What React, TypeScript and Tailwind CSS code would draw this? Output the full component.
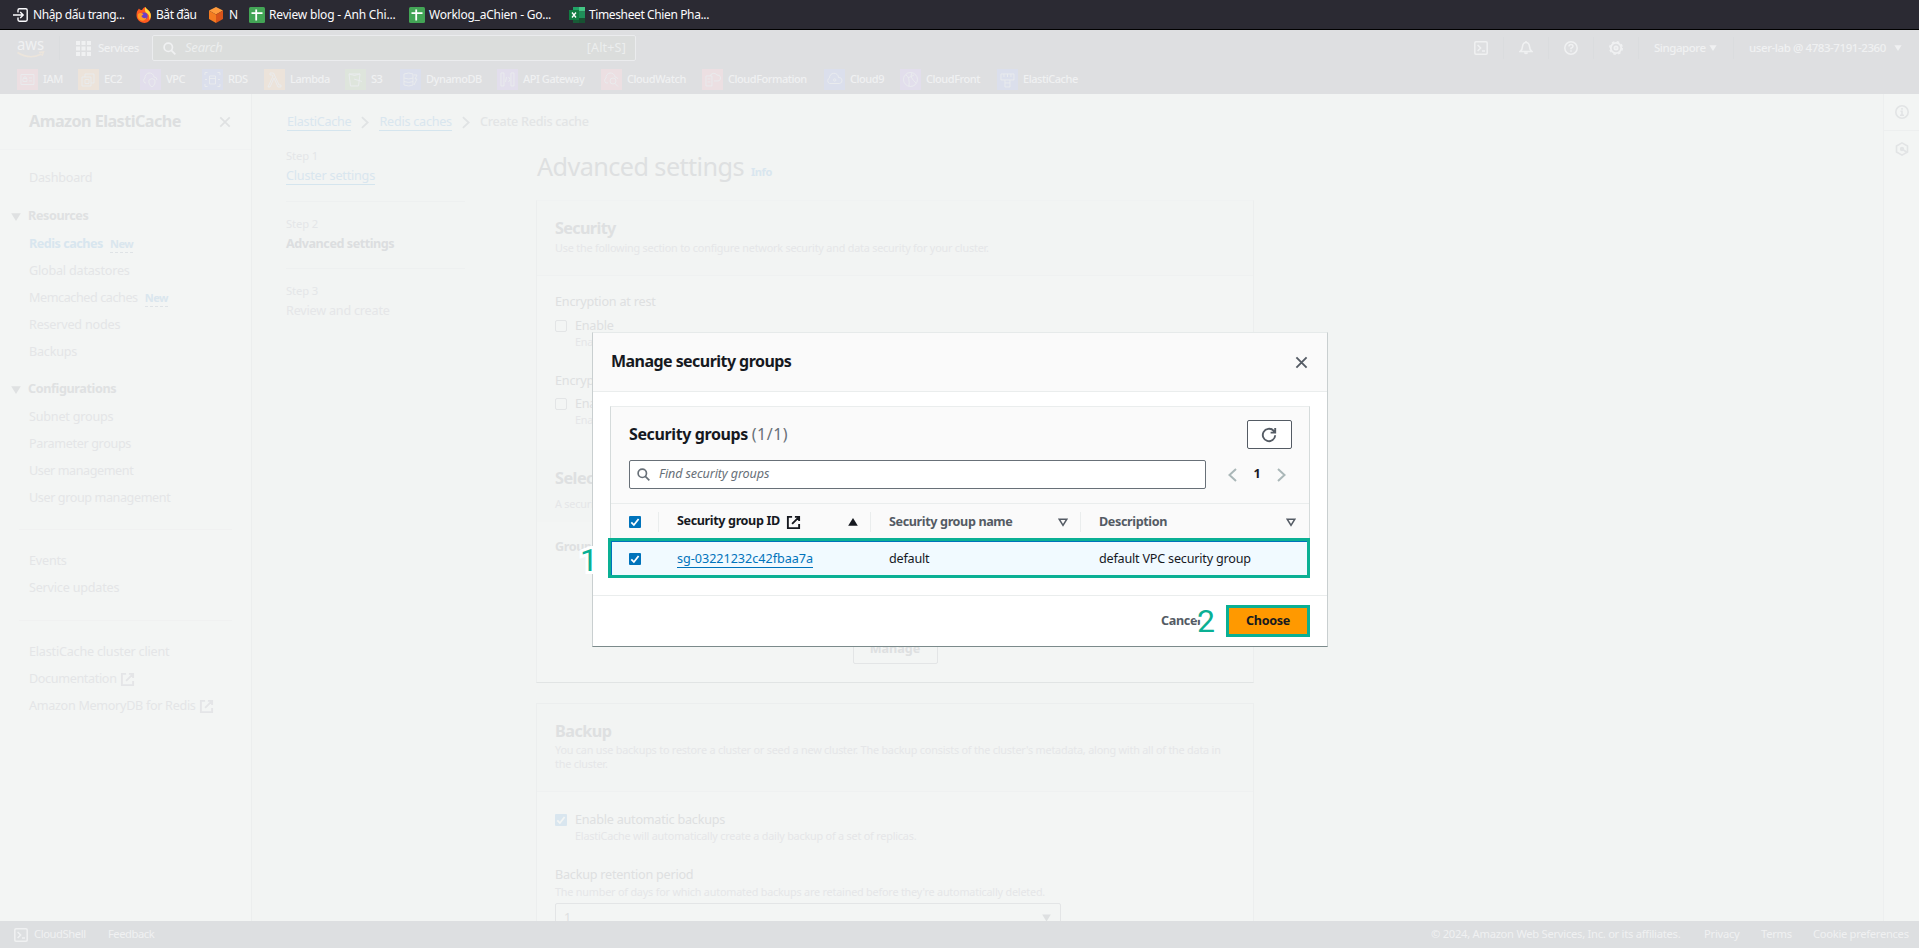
import React from 'react';

type IconProps = { className?: string };

const ExternalIcon = ({ className = '' }: IconProps) => (
  <svg viewBox="0 0 16 16" className={className} fill="none" stroke="currentColor" strokeWidth="2">
    <path d="M6.5 2H2v12h12V9.5M9.5 2H14v4.5M14 2 6.5 9.5" />
  </svg>
);

const CloseIcon = ({ className = '' }: IconProps) => (
  <svg viewBox="0 0 14 14" className={className} fill="none" stroke="currentColor" strokeWidth="2">
    <path d="m1.5 1.5 11 11M12.5 1.5l-11 11" />
  </svg>
);

const ChevronIcon = ({ className = '' }: IconProps) => (
  <svg viewBox="0 0 9 14" className={className} fill="none" stroke="currentColor" strokeWidth="2">
    <path d="m1 1 6.5 6L1 13" />
  </svg>
);

const SearchIcon = ({ className = '' }: IconProps) => (
  <svg viewBox="0 0 14 14" className={className} fill="none" stroke="currentColor" strokeWidth="1.8">
    <circle cx="5.7" cy="5.7" r="4.5" />
    <path d="m9 9 4.3 4.3" />
  </svg>
);

const Caret = ({ className = '' }: IconProps) => (
  <svg viewBox="0 0 10 8" className={className} fill="currentColor">
    <path d="M.2.2h9.600L5 7.900z" />
  </svg>
);

const ShellIcon = ({ className = '' }: IconProps) => (
  <svg viewBox="0 0 14 14" className={className} fill="none" stroke="currentColor" strokeWidth="1.5">
    <rect x=".8" y=".8" width="12.4" height="12.4" rx="1.2" />
    <path d="m3.6 4 3 3-3 3M8 10h3" />
  </svg>
);

const Check = ({ className = '' }: IconProps) => (
  <span className={`block size-3 shrink-0 rounded-[1px] ${className}`}>
    <svg viewBox="0 0 12 12" className="size-3" fill="none" stroke="currentColor" strokeWidth="1.8">
      <path d="M2.3 6.3 4.9 9l4.7-6" />
    </svg>
  </span>
);

const Sheets = () => (
  <svg viewBox="0 0 16 16" className="size-4 shrink-0">
    <rect width="16" height="16" rx="1.5" fill="#43a556" />
    <path d="M7.2 2.5v11M2.5 6.2h11" stroke="#fff" strokeWidth="1.8" />
  </svg>
);

function BookmarksBar() {
  return (
    <div className="flex h-[30px] shrink-0 items-center border-b border-black bg-[#2b2a33] pt-px pl-[13px] text-[12px] tracking-[-0.38px] text-[#fbfbfe]">
      <div className="flex w-[123px] items-center gap-1">
        <svg viewBox="0 0 16 16" className="size-4 shrink-0" fill="none" stroke="currentColor" strokeWidth="1.4">
          <path d="M5 5.5V3.2Q5 1.8 6.400 1.800h6.400Q14.200 1.800 14.200 3.200v9.600Q14.200 14.200 12.800 14.200H6.400Q5 14.200 5 12.800v-2.300M0 8h10M7.200 5l3 3-3 3" />
        </svg>
        <span className="tracking-[-0.42px]">Nhập dấu trang...</span>
      </div>
      <div className="flex w-[72px] items-center gap-1">
        <svg viewBox="0 0 16 16" className="size-4 shrink-0">
          <path d="M1 4.500C2 3 2.500 2 3 1.500 3.500 2.500 5 3 6 3c1-2 2.500-3 3.500-3C10 2 12 2.500 13.500 4.500 16 8 15.500 13 11.500 15.200 7.500 17.200 2.500 15 1 11 .3 9 .4 6.500 1 4.500z" fill="#ff5a1f" />
          <path d="M9.500 0c.5 2 2.500 2.500 4 4.500 2 3 1.800 6-.3 8.500.5-4-.5-6-3.500-7.500C9 4 8.500 2 9.500 0z" fill="#ffd83a" />
          <circle cx="8" cy="9" r="3.600" fill="#6a3fc8" />
          <path d="M2 7c2-1.500 4-1 5.500.3L5.500 9c.5 2 3 3 5 1.500-.5 3-4 4-6.500 2.500S1.500 9 2 7z" fill="#ff9a26" />
        </svg>
        <span className="tracking-[-0.45px]">Bắt đầu</span>
      </div>
      <div className="flex w-[41px] items-center gap-[5px]">
        <svg viewBox="0 0 16 16" className="size-4 shrink-0">
          <path d="M8 0 15 3.500 8 7.500 1 3.500z" fill="#ff9a3c" />
          <path d="M1 3.500 8 7.500V16l-7-4z" fill="#f47a20" />
          <path d="M15 3.500 8 7.500V16l7-4z" fill="#d9541a" />
        </svg>
        <span>N</span>
      </div>
      <div className="flex w-40 items-center gap-1">
        <Sheets />
        <span className="tracking-[-0.18px]">Review blog - Anh Chi...</span>
      </div>
      <div className="flex w-40 items-center gap-1">
        <Sheets />
        <span className="tracking-[-0.24px]">Worklog_aChien - Go...</span>
      </div>
      <div className="flex items-center gap-1">
        <svg viewBox="0 0 16 16" className="size-4 shrink-0">
          <path d="M4 0h6v8H4z" fill="#21a366" />
          <path d="M10 0h6v4.500h-6z" fill="#43c584" />
          <path d="M10 4.500h6V11h-6z" fill="#1f8f59" />
          <path d="M4 8h6v8H4z" fill="#185c37" />
          <path d="M10 11h6v5h-6z" fill="#175232" />
          <path d="M0 3h10v10H0z" fill="#107c41" />
          <path d="m3 5.500 4 5M7 5.500l-4 5" stroke="#fff" strokeWidth="1.300" />
        </svg>
        <span>Timesheet Chien Pha...</span>
      </div>
    </div>
  );
}

const glyphs: Record<string, string> = {
  id: 'M4 5.500h13v10H4zM6 12.500h4v-3H6zM6.800 9.500V8h2.400v1.500M12 9h3M12 12h3',
  chip: 'M4 8h9v9H4zM7 8V5h9v9h-3M7 10.500h4v4H7z',
  cloudShield: 'M6 14H5a3 3 0 0 1 0-5 4.500 4.500 0 0 1 9-1 3 3 0 0 1 3 3M9 11l3-1.500 3 1.500v3q-1 3-3 4-2-1-3-4z',
  db: 'M7.500 7h6v8h-6zM7.500 9.500h6M3 6V3.500h2.500M18 6V3.500h-2.500M3 15v2.500h2.500M18 15v2.500h-2.500M3 10.500h2M16 10.500h2',
  lambda: 'M6 4h3.500l5.500 12h2v2h-3L10 9l-4 9H4l5-11-.6-1H6z',
  bucket: 'M4 5h11l-1.500 12h-8zM4 5q5.500 3 11 0M9 10l8 2.500',
  table: 'M4 5q5-2 9 0v11q-4 2-9 0zM4 9q5 2 9 0M4 12.500q5 2 9 0M14 6h3l-2 4h2l-3 6',
  gateway: 'M4 4h3v13H4zM14 4h3v13h-3zM9.500 8l-1 5M11.500 8l1.500 2.500-1.500 2.500',
  cloudSearch: 'M7 14H5a3 3 0 0 1 0-5 4.500 4.500 0 0 1 9-1 3 3 0 0 1 3 2M9 12a3 3 0 1 0 6 0 3 3 0 1 0-6 0M14 14.500l3 3',
  stack: 'M4 7h6v10H4zM5.500 10h3M5.500 13h3M8 7a4 4 0 0 1 7-1 3 3 0 0 1 1 6h-4',
  cloud: 'M5.500 14.500a3 3 0 0 1 0-5.500 4.500 4.500 0 0 1 9-.5 3 3 0 0 1 1 6zM9.500 11a1.200 1.200 0 1 0 2.400 0 1.200 1.200 0 1 0-2.400 0',
  globe: 'M3.500 10.500a7 7 0 1 0 14 0 7 7 0 1 0-14 0M6 6q4 2 3 11M12 4q-3 4 4 10M8 9l6-3',
  cache: 'M4 5h13v6H4zM7 5v3M10.500 5v3M14 5v3M8 11v7h5v-7M8 14h5',
};

const RED = 'bg-[#ecdfe2]';
const ORANGE = 'bg-[#ece3da]';
const PURPLE = 'bg-[#e2deec]';
const BLUE = 'bg-[#dbdfec]';
const GREEN = 'bg-[#dee5dc]';

const services: [string, string, string, string][] = [
  ['IAM', 'id', RED, 'w-[61px]'],
  ['EC2', 'chip', ORANGE, 'w-[62px]'],
  ['VPC', 'cloudShield', PURPLE, 'w-[62px]'],
  ['RDS', 'db', BLUE, 'w-[62px]'],
  ['Lambda', 'lambda', ORANGE, 'w-[81px]'],
  ['S3', 'bucket', GREEN, 'w-[55px]'],
  ['DynamoDB', 'table', BLUE, 'w-[97px]'],
  ['API Gateway', 'gateway', PURPLE, 'w-[104px]'],
  ['CloudWatch', 'cloudSearch', RED, 'w-[101px]'],
  ['CloudFormation', 'stack', RED, 'w-[122px]'],
  ['Cloud9', 'cloud', BLUE, 'w-[76px]'],
  ['CloudFront', 'globe', PURPLE, 'w-[97px]'],
  ['ElastiCache', 'cache', BLUE, 'w-[90px]'],
];

function TopNav() {
  return (
    <header className="flex h-16 shrink-0 flex-col bg-[#dedfe1] text-[#f0f1f2]">
      <div className="flex h-9 items-center pl-[17px]">
        <svg viewBox="0 0 28 22" className="-mt-px h-[22px] w-7" fill="none" stroke="currentColor">
          <text x="0" y="12.500" fontSize="15.500" fontFamily="Noto Sans" textLength="27" lengthAdjust="spacingAndGlyphs" fill="currentColor" stroke="none">aws</text>
          <path d="M.5 15.500q12 7.500 24 1.500M22 15.500l4.500-.5-1.500 4" stroke="#ece5dc" strokeWidth="1.500" />
        </svg>
        <div className="ml-3.5 h-6 w-px bg-[#dadcde]" />
        <svg viewBox="0 0 15 15" className="ml-4 size-[15px]" fill="currentColor">
          {[0, 5.500, 11].map((y) => [0, 5.500, 11].map((x) => <rect key={`${x}-${y}`} x={x} y={y} width="4" height="4" />))}
        </svg>
        <span className="ml-[7px] w-[54px] text-[11.500px] font-medium tracking-[-0.5px]">Services</span>
        <div className="flex h-[26px] w-[484px] items-center rounded-[2px] border border-[#ebecee] bg-[#dbdddc] pr-[9px] pl-[10px]">
          <SearchIcon className="size-[13px]" />
          <span className="ml-[9px] grow text-[13px] tracking-[-0.2px] italic text-[#eceeee]">Search</span>
          <span className="text-[12.500px] tracking-[0.2px] text-[#eceeee]">[Alt+S]</span>
        </div>
        <div className="ml-auto flex h-full items-center pr-[17px] text-[11.500px] tracking-[-0.25px]">
          <div className="flex h-[22px] w-[45px] items-center justify-center border-r border-[#dadcde]"><ShellIcon className="size-3.5" /></div>
          <div className="flex h-[22px] w-[45px] items-center justify-center border-r border-[#dadcde]">
            <svg viewBox="0 0 14 14" className="size-3.5" fill="none" stroke="currentColor" strokeWidth="1.600"><path d="M1 10.500h12q-2.500-2-2.500-5Q10 1.500 7 1.500T3.500 5.500q0 3-2.500 5zM5.500 11.500q1.500 2 3 0M7 0v1.500" /></svg>
          </div>
          <div className="flex h-[22px] w-[45px] items-center justify-center border-r border-[#dadcde]">
            <svg viewBox="0 0 14 14" className="size-3.5" fill="none" stroke="currentColor" strokeWidth="1.500"><circle cx="7" cy="7" r="6.200" /><path d="M5 5.500Q5 3.500 7 3.500t2 1.800Q9 6.500 7 7.300v1M7 9.300v1.500" /></svg>
          </div>
          <div className="flex h-[22px] w-[45px] items-center justify-center border-r border-[#dadcde]">
            <svg viewBox="0 0 14 14" className="size-3.5" fill="none" stroke="currentColor" strokeWidth="1.800"><circle cx="7" cy="7" r="5.200" /><circle cx="7" cy="7" r="1.600" /><circle cx="7" cy="7" r="6.300" strokeDasharray="2.500 2.448" strokeWidth="1.400" /></svg>
          </div>
          <div className="flex h-[22px] w-[95px] items-center justify-between border-r border-[#dadcde] pr-[16px] pl-[15px]"><span className="font-medium tracking-[-0.45px]">Singapore</span><Caret className="h-1.5 w-[8px]" /></div>
          <div className="flex w-[168px] items-center justify-between pl-[15px]"><span className="font-medium tracking-[-0.42px] whitespace-nowrap">user-lab @ 4783-7191-2360</span><Caret className="h-1.5 w-[8px]" /></div>
        </div>
      </div>
      <div className="flex h-[26px] items-center pl-[17px] text-[11px] font-medium">
        {services.map(([name, glyph, tint, width]) => (
          <div key={name} className={`flex items-center gap-[5px] ${width}`}>
            <span className={`block size-[21px] shrink-0 text-[#eaecee] ${tint}`}>
              <svg viewBox="0 0 21 21" className="size-[21px]" fill="none" stroke="currentColor" strokeWidth=".9"><path d={glyphs[glyph]} /></svg>
            </span>
            <span className="tracking-[-0.45px] whitespace-nowrap">{name}</span>
          </div>
        ))}
      </div>
    </header>
  );
}

const NavItem = ({ children, className = '' }: { children: React.ReactNode; className?: string }) => (
  <li className={`flex h-[27px] items-center pl-[29px] ${className}`}>{children}</li>
);

const NavGroup = ({ children }: { children: React.ReactNode }) => (
  <div className="flex h-[29px] items-center pl-[11px] font-bold tracking-[-0.38px] text-[#dfe1e2]">
    <Caret className="mr-[7px] h-2 w-[10px]" />
    {children}
  </div>
);

const NewTag = () => (
  <span className="ml-[7px] border-b border-dashed border-[#dfe3e6] text-[11px] leading-4 font-bold tracking-[-0.45px] text-[#dae6ee]">New</span>
);

function Sidebar() {
  return (
    <nav className="h-full w-[252px] shrink-0 border-r border-[#eceeee] bg-[#f3f5f4] text-[12.600px] tracking-[-0.2px] text-[#e4e5e7]">
      <div className="flex h-14 items-center border-b border-[#f0f2f2] pr-[20px] pl-[29px]">
        <h2 className="grow text-[16.200px] font-bold tracking-[-0.55px] text-[#dddfe0]">Amazon ElastiCache</h2>
        <CloseIcon className="size-3 text-[#dfe1e2]" />
      </div>
      <ul className="pt-[15px]"><NavItem>Dashboard</NavItem></ul>
      <div className="h-[10px]" />
      <NavGroup>Resources</NavGroup>
      <ul>
        <NavItem><span className="font-bold tracking-[-0.48px] text-[#d8e6ef]">Redis caches</span><NewTag /></NavItem>
        <NavItem>Global datastores</NavItem>
        <NavItem className="tracking-[-0.42px]">Memcached caches<NewTag /></NavItem>
        <NavItem>Reserved nodes</NavItem>
        <NavItem>Backups</NavItem>
      </ul>
      <div className="h-[9px]" />
      <NavGroup>Configurations</NavGroup>
      <ul>
        <NavItem>Subnet groups</NavItem>
        <NavItem className="tracking-[-0.35px]">Parameter groups</NavItem>
        <NavItem className="tracking-[-0.42px]">User management</NavItem>
        <NavItem className="tracking-[-0.4px]">User group management</NavItem>
      </ul>
      <div className="mx-[19px] mt-[17px] h-px bg-[#f0f1f1]" />
      <ul className="pt-[18px]">
        <NavItem>Events</NavItem>
        <NavItem>Service updates</NavItem>
      </ul>
      <div className="mx-[19px] mt-[18px] h-px bg-[#f0f1f1]" />
      <ul className="pt-[18px]">
        <NavItem>ElastiCache cluster client</NavItem>
        <NavItem className="tracking-[-0.35px]">Documentation<ExternalIcon className="ml-[3px] size-[15px]" /></NavItem>
        <NavItem className="tracking-[-0.3px]">Amazon MemoryDB for Redis<ExternalIcon className="ml-[3px] size-[15px]" /></NavItem>
      </ul>
    </nav>
  );
}

const steps: [string, string, string][] = [
  ['Step 1', 'Cluster settings', 'border-b border-[#d5e5ee] tracking-[-0.2px] text-[#d9e6ef]'],
  ['Step 2', 'Advanced settings', 'font-bold tracking-[-0.45px] text-[#dcdee0]'],
  ['Step 3', 'Review and create', 'tracking-[-0.2px] text-[#e5e6e8]'],
];

function Steps() {
  return (
    <ol className="w-[250px] shrink-0">
      {steps.map(([step, label, style], i) => (
        <li key={step} className={`h-[67px] w-[179px] pt-[13px] ${i ? 'border-t border-[#eef0f0]' : ''}`}>
          <div className="h-[20px] text-[11.200px] leading-[17px] tracking-[-0.1px] text-[#e4e6e8]">{step}</div>
          <div className="flex text-[12.600px] leading-[17px]"><span className={style}>{label}</span></div>
        </li>
      ))}
    </ol>
  );
}

const Hint = ({ children, className = '' }: { children: React.ReactNode; className?: string }) => (
  <p className={`text-[10.800px] leading-[14px] tracking-[-0.19px] text-[#e5e6e8] ${className}`}>{children}</p>
);

const Option = ({ label, hint, checked }: { label: string; hint: string; checked?: boolean }) => (
  <div>
    <div className="flex h-4 items-center gap-2 text-[12.600px] tracking-[-0.22px]">
      {checked ? <Check className="bg-[#d9e6ef] text-[#f3f5f4]" /> : <span className="size-3 rounded-[2px] border border-[#e3e5e6]" />}
      {label}
    </div>
    <Hint className="mt-px pl-5">{hint}</Hint>
  </div>
);

function Content() {
  return (
    <div className="w-[718px] text-[#dee0e1]">
      <div className="flex h-[66px] items-baseline pt-[13px] pl-px">
        <h1 className="text-[25.200px] leading-[38px] tracking-[-0.56px]">Advanced settings</h1>
        <span className="ml-[7px] text-[11px] font-bold tracking-[-0.4px] text-[#d9e6ef]">Info</span>
      </div>
      <section className="h-[483px] border border-t-[#f0f2f2] border-r-[#eceeee] border-b-[#e1e4e4] border-l-[#eceeee] bg-[#f3f5f4]">
        <div className="h-[75px] border-b border-[#eff1f1] bg-[#f2f4f3] px-[18px] pt-4">
          <h2 className="text-[16.200px] leading-[22px] font-bold tracking-[-0.65px]">Security</h2>
          <Hint className="mt-0.5">Use the following section to configure network security and data security for your cluster.</Hint>
        </div>
        <div className="h-[174px] px-[18px] pt-[18px]">
          <div className="h-[24px] text-[12.600px] leading-4 tracking-[-0.2px]">Encryption at rest</div>
          <Option label="Enable" hint="Enables encryption of data stored on disk." />
          <div className="mt-6 h-[23px] text-[12.600px] leading-4 tracking-[-0.2px]">Encryption in transit</div>
          <Option label="Enable" hint="Enables encryption of data on the wire." />
        </div>
        <div className="h-[72px] bg-[#f2f4f3] px-[18px] pt-[17px]">
          <h2 className="text-[16.200px] leading-[22px] font-bold tracking-[-0.5px]">Selected security groups</h2>
          <Hint className="mt-2">A security group acts as a firewall.</Hint>
        </div>
        <div className="px-[18px] pt-[17px]">
          <div className="text-[12.600px] leading-4 font-bold tracking-[-0.4px]">Group ID</div>
          <div className="mt-[78px] flex justify-center">
            <button className="h-[31px] w-[85px] rounded-[2px] border border-[#e3e5e6] text-[12.600px] leading-[29px] font-bold">Manage</button>
          </div>
        </div>
      </section>
      <section className="mt-5 h-[260px] border border-[#eceeee] bg-[#f3f5f4]">
        <div className="h-[88px] border-b border-[#eff1f1] bg-[#f2f4f3] px-[18px] pt-4">
          <h2 className="text-[16.200px] leading-[22px] font-bold tracking-[-0.5px]">Backup</h2>
          <Hint className="mt-px">You can use backups to restore a cluster or seed a new cluster. The backup consists of the cluster's metadata, along with all of the data in the cluster.</Hint>
        </div>
        <div className="px-[18px] pt-[20px]">
          <Option checked label="Enable automatic backups" hint="ElastiCache will automatically create a daily backup of a set of replicas." />
          <div className="mt-[24px] text-[12.600px] leading-4 tracking-[-0.22px]">Backup retention period</div>
          <Hint className="mt-[2px]">The number of days for which automated backups are retained before they're automatically deleted.</Hint>
          <div className="mt-[4px] flex h-[30px] w-[506px] items-center justify-between rounded-[2px] border border-[#e3e5e6] pr-[9px] pl-2 text-[12.600px]">
            1<Caret className="h-2 w-[9px]" />
          </div>
        </div>
      </section>
    </div>
  );
}

function ToolRail() {
  return (
    <aside className="flex h-full w-9 shrink-0 flex-col border-l border-[#edefef] bg-[#f3f5f4] text-[#e2e4e5]">
      <div className="flex h-[37px] items-center justify-center border-b border-[#edefef]">
        <svg viewBox="0 0 14 14" className="size-3.5" fill="none" stroke="currentColor" strokeWidth="1.600"><circle cx="7" cy="7" r="6.200" /><path d="M7 3v1.700M5.500 6.300H7v4M5 10.300h4" /></svg>
      </div>
      <div className="flex h-[36px] items-center justify-center">
        <svg viewBox="0 0 14 14" className="size-3.5" fill="none" stroke="currentColor" strokeWidth="1.600"><path d="M7 .9 12.500 4v6L7 13.100 1.500 10V4zM7 7l4.500 3" /><circle cx="7" cy="7" r="1.400" fill="currentColor" /></svg>
      </div>
    </aside>
  );
}

function Footer() {
  return (
    <footer className="flex h-[27px] shrink-0 items-center bg-[#dddfe1] pr-[14px] pl-3.5 text-[11.200px] tracking-[-0.25px] text-[#f0f1f2]">
      <ShellIcon className="size-3.5" />
      <span className="ml-[6px] w-[74px] tracking-[-0.4px]">CloudShell</span>
      <span className="tracking-[-0.45px]">Feedback</span>
      <span className="ml-auto w-[273px] tracking-[-0.27px] whitespace-nowrap">© 2024, Amazon Web Services, Inc. or its affiliates.</span>
      <span className="w-[57px]">Privacy</span>
      <span className="w-[52px]">Terms</span>
      <span className="w-[92px] tracking-[-0.3px] whitespace-nowrap">Cookie preferences</span>
    </footer>
  );
}

const SortIcon = ({ className = '' }: IconProps) => (
  <svg viewBox="0 0 10 9" className={`h-[9px] w-[10px] ${className}`} fill="none" stroke="currentColor" strokeWidth="1.600">
    <path d="M1.300 1.300h7.400L5 7.300z" />
  </svg>
);

function Modal() {
  return (
    <div role="dialog" className="absolute top-[332px] left-[592px] flex h-[315px] w-[736px] flex-col border border-t-[#e6eaea] border-r-[#c9cfd0] border-b-[#7b8a8b] border-l-[#c9cfd0] bg-white text-[12.600px] text-[#16191f]">
      <div className="flex h-[59px] shrink-0 items-center justify-between border-b border-[#eaeded] bg-[#fafafa] pr-[19px] pl-[18px]">
        <h2 className="mb-0.5 text-[16px] font-bold tracking-[-0.55px]">Manage security groups</h2>
        <CloseIcon className="size-[13px] text-[#545b64]" />
      </div>
      <div className="h-[203px] shrink-0 px-[17px] pt-[14px]">
        <div className="border border-t-[#eaeded] border-r-[#d5dbdb] border-b-transparent border-l-[#d5dbdb] bg-[#fafafa]">
          <div className="flex h-[42px] items-end justify-between pr-[17px] pl-[18px]">
            <h3 className="mb-[3px] text-[16px] font-bold tracking-[-0.38px]">
              Security groups <span className="font-normal tracking-[0.5px] text-[#687078]">(1/1)</span>
            </h3>
            <button className="flex h-[29px] w-[45px] items-center justify-center rounded-[2px] border border-[#545b64] bg-white pr-px text-[#545b64]">
              <svg viewBox="0 0 16 16" className="size-4" fill="none" stroke="currentColor" strokeWidth="1.900"><path d="M14.200 8.300A6.200 6.200 0 1 1 12.300 3.500L14 5.200M14.200 1v4.600H9.600" /></svg>
            </button>
          </div>
          <div className="flex h-[55px] items-start border-b border-[#eaeded] pt-[11px] pl-[18px]">
            <div className="flex h-[29px] w-[577px] items-center gap-[9px] rounded-[2px] border border-[#687078] bg-white pl-[7px] text-[#687078]">
              <SearchIcon className="size-[13px]" />
              <span className="tracking-[-0.12px] italic">Find security groups</span>
            </div>
            <div className="ml-[22px] flex h-[29px] w-[58px] items-center justify-between">
              <ChevronIcon className="h-[14px] w-[9px] rotate-180 text-[#aab7b8]" />
              <span className="font-bold">1</span>
              <ChevronIcon className="h-[14px] w-[9px] text-[#aab7b8]" />
            </div>
          </div>
          <div className="flex h-[36px] items-center pl-[18px] font-bold tracking-[-0.38px] text-[#545b64]">
            <div className="flex h-5 w-[30px] items-center border-r border-[#eaeded]"><Check className="bg-[#0073bb] text-white" /></div>
            <div className="flex h-5 w-[212px] items-center border-r border-[#eaeded] pr-3 pl-[18px] text-[#16191f]">
              <span className="mb-px">Security group ID</span>
              <ExternalIcon className="ml-[6px] size-[15px]" />
              <Caret className="ml-auto h-2 w-[10px] rotate-180" />
            </div>
            <div className="flex h-5 w-[210px] items-center justify-between border-r border-[#eaeded] pr-[12px] pl-[18px]">Security group name<SortIcon /></div>
            <div className="flex h-5 grow items-center justify-between pr-[13px] pl-[18px]">Description<SortIcon /></div>
          </div>
        </div>
        <div className="-mt-[3px] -ml-[2px] w-[702px] border-[3px] border-[#0ab094]">
          <div className="flex h-[34px] items-center border-t border-l border-[#0073bb] bg-[#f1faff] pt-px pl-[17px] tracking-[-0.2px]">
            <Check className="mr-9 bg-[#0073bb] text-white" />
            <div className="w-[212px]"><a className="inline-block border-b border-[#0073bb] leading-4 tracking-[-0.02px] text-[#0073bb]">sg-03221232c42fbaa7a</a></div>
            <span className="w-[210px]">default</span>
            <span>default VPC security group</span>
          </div>
        </div>
      </div>
      <div className="flex grow items-center border-t border-[#eaeded] pr-[17px] font-bold">
        <span className="ml-auto w-[65px] tracking-[-0.35px] text-[#545b64]">Cancel</span>
        <button className="h-8 w-[84px] border-[3px] border-[#0ab094] bg-[#ff9900] tracking-[-0.3px]">Choose</button>
      </div>
      <span className="absolute top-[205px] left-[-13px] font-['Roboto'] text-[32px] leading-[44px] text-[#0ab094] [-webkit-text-stroke:6px_white] [paint-order:stroke_fill]">1</span>
      <span className="absolute top-[266px] left-[604px] font-['Roboto'] text-[32px] leading-[44px] text-[#0ab094] [-webkit-text-stroke:6px_white] [paint-order:stroke_fill]">2</span>
    </div>
  );
}

export default function App() {
  return (
    <div className="relative flex h-[948px] w-[1919px] flex-col overflow-hidden bg-[#f2f4f3] font-['Noto_Sans',sans-serif]">
      <BookmarksBar />
      <TopNav />
      <div className="flex min-h-0 grow overflow-hidden">
        <Sidebar />
        <main className="min-w-0 grow overflow-hidden pl-[34px]">
          <div className="flex h-[45px] items-center pt-[11px] pl-px text-[12.600px] tracking-[-0.24px] text-[#d9e6ef]">
            <a className="border-b border-[#d5e5ee] leading-4">ElastiCache</a>
            <ChevronIcon className="mx-[10px] h-[13px] w-2 text-[#e0e3e4]" />
            <a className="border-b border-[#d5e5ee] leading-4">Redis caches</a>
            <ChevronIcon className="mx-[10px] h-[13px] w-2 text-[#e0e3e4]" />
            <span className="font-medium tracking-[-0.25px] text-[#e3e5e6]">Create Redis cache</span>
          </div>
          <div className="-mt-[5px] flex items-start">
            <Steps />
            <Content />
          </div>
        </main>
        <ToolRail />
      </div>
      <Footer />
      <Modal />
    </div>
  );
}
